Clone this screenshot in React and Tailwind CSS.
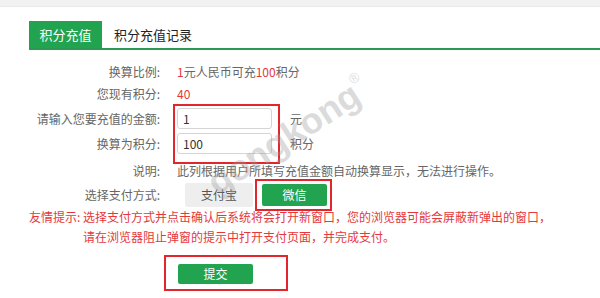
export default function App() {
  const font = { fontFamily: '"Noto Sans CJK SC", "Noto Sans", sans-serif' }
  return (
    <div className="relative w-[600px] h-[298px] overflow-hidden bg-white text-[12px] text-[#666]" style={font}>
      {/* top strip */}
      <div className="h-[7px] bg-[#f2f2f2] border-b border-[#e9e9e9]"></div>

      {/* tabs */}
      <div className="ml-[29px] mt-[14px] flex items-end border-b-2 border-[#2a9a52]">
        <div className="w-[73px] h-[27px] bg-[#22a350] text-white text-[13px] flex items-center justify-center">积分充值</div>
        <div className="ml-[12px] h-[27px] text-[13px] text-[#222] flex items-center">积分充值记录</div>
      </div>

      {/* form */}
      <div className="mt-[11px]">
        <div className="flex h-[22px] items-center">
          <span className="w-[160px] text-right">换算比例:</span>
          <span className="ml-[17px]">
            <span className="text-[#e4393c]">1</span>元人民币可充<span className="text-[#e4393c]">100</span>积分
          </span>
        </div>
        <div className="flex h-[22px] items-center">
          <span className="w-[160px] text-right">您现有积分:</span>
          <span className="ml-[17px] text-[#e4393c]">40</span>
        </div>

        <div className="flex -mt-[1px]">
          <div className="w-[160px] flex flex-col items-end pt-[4px]">
            <span className="h-[21px] leading-[21px]">请输入您要充值的金额:</span>
            <span className="mt-[4px] h-[21px] leading-[21px]">换算为积分:</span>
          </div>
          <div className="ml-[13px] border-2 border-[#e2262b] pl-[2px] pr-[6px] pt-[2px] pb-[8px] flex flex-col gap-[4px]">
            <input className="w-[95px] h-[21px] border border-[#d5d5d5] rounded-[3px] px-[5px] text-[12px] text-[#333] outline-none" defaultValue="1" style={font} />
            <input className="w-[95px] h-[21px] border border-[#d5d5d5] rounded-[3px] px-[5px] text-[12px] text-[#333] outline-none" defaultValue="100" style={font} />
          </div>
          <div className="ml-[10px] flex flex-col pt-[4px]">
            <span className="h-[21px] leading-[21px]">元</span>
            <span className="mt-[4px] h-[21px] leading-[21px]">积分</span>
          </div>
        </div>

        <div className="flex h-[14px] items-center">
          <span className="w-[160px] text-right">说明:</span>
          <span className="ml-[17px]">此列根据用户所填写充值金额自动换算显示，无法进行操作。</span>
        </div>

        <div className="flex items-center mt-[1px]">
          <span className="w-[160px] text-right">选择支付方式:</span>
          <button className="ml-[25px] w-[68px] h-[24px] bg-[#eeeeee] rounded-[2px] text-[12px] text-[#555]">支付宝</button>
          <div className="ml-[2px] border-2 border-[#e2262b] p-[3px] pl-[5px] pr-[3px]">
            <button className="w-[65px] h-[22px] bg-[#22a350] rounded-[2px] text-[12px] text-white">微信</button>
          </div>
        </div>

        <div className="-mt-[4px] text-[#e4393c] leading-[20px]">
          <div className="flex">
            <span className="ml-[29px] w-[54px]">友情提示:</span>
            <span>选择支付方式并点击确认后系统将会打开新窗口，您的浏览器可能会屏蔽新弹出的窗口，</span>
          </div>
          <div className="ml-[83px]">请在浏览器阻止弹窗的提示中打开支付页面，并完成支付。</div>
        </div>

        <div className="ml-[164px] mt-[8px] w-[124px] border-2 border-[#e2262b] pl-[12px] pt-[7px] pb-[5px]">
          <button className="w-[75px] h-[20px] bg-[#22a350] rounded-[2px] text-[12px] text-white">提交</button>
        </div>
      </div>

      {/* watermark */}
      <div className="absolute left-[196px] top-[118px] -rotate-[33deg] origin-center text-[36px] font-bold text-[#9a9a9a] opacity-35 leading-none select-none" style={{ fontFamily: '"Liberation Sans", Arial, sans-serif' }}>
        gongkong<sup className="text-[14px] font-normal align-super">®</sup>
      </div>
    </div>
  )
}
